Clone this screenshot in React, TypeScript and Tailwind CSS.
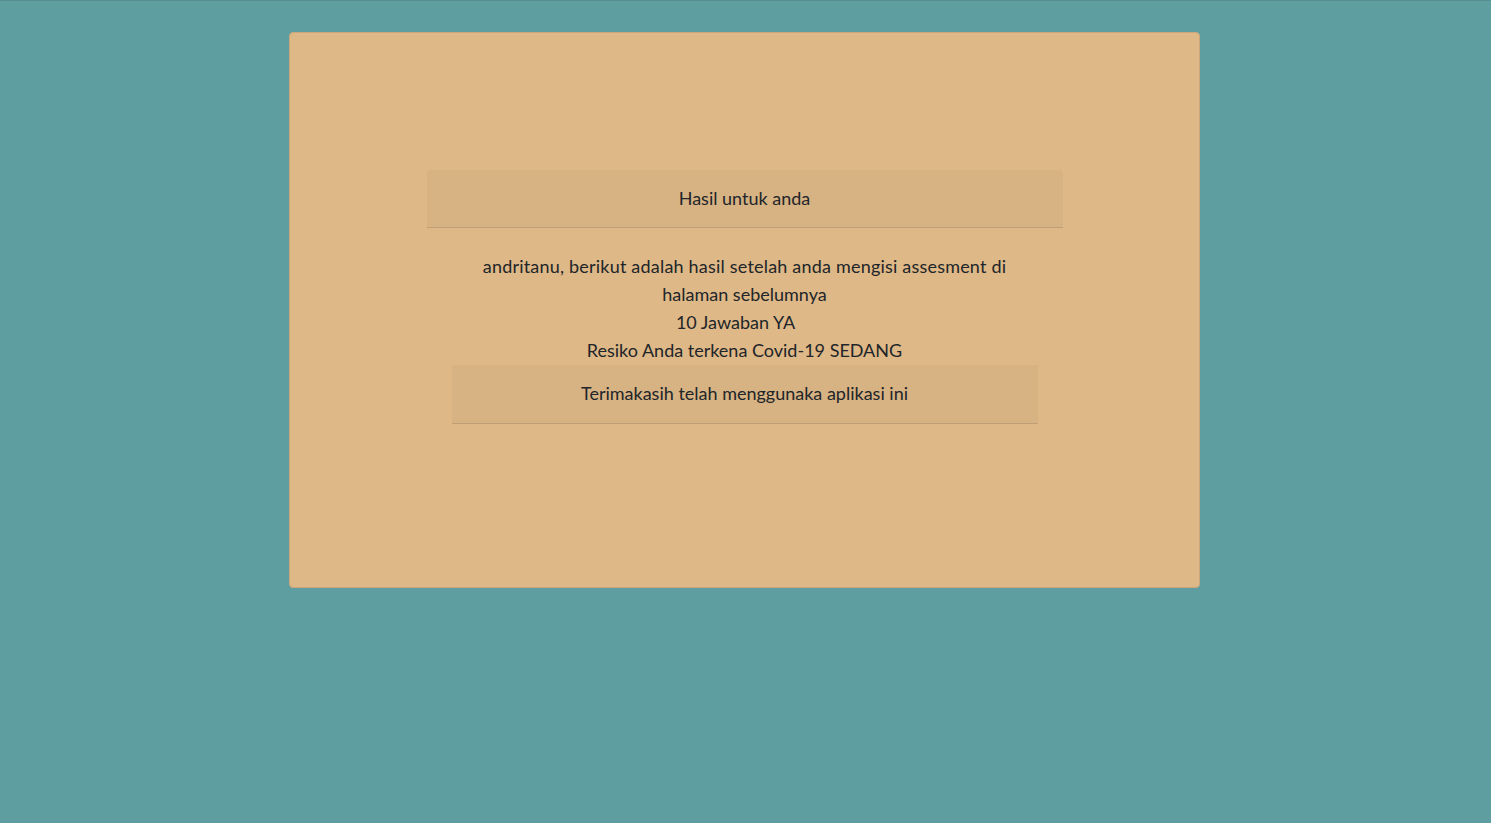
import React from 'react';

const hasil = {
  nama: 'andritanu',
  jumlahYa: 10,
  resiko: 'SEDANG',
};

export default function App() {
  return (
    <div className="min-h-[823px] w-full bg-[#5f9ea0] border-t border-[#578f91] pt-[31px] font-['Lato','Noto_Sans',sans-serif] text-[#212529]">
      <div className="mx-auto flex h-[556px] w-[911px] -translate-x-px flex-col items-center rounded border border-[#c9a77b] bg-[#deb887] pt-[137px]">
        <div className="flex h-[58px] w-[636px] items-center justify-center rounded-t border-b border-[#bf9f76] bg-[#d7b283] pb-[1px] text-[18px]">
          Hasil untuk anda
        </div>
        <div className="mt-[24px] text-center text-[18px] leading-[28px]">
          <p className="whitespace-nowrap tracking-[0.2px]">
            {hasil.nama}, berikut adalah hasil setelah anda mengisi assesment di
          </p>
          <p>halaman sebelumnya</p>
          <p className="pr-[18px]">{hasil.jumlahYa} Jawaban YA</p>
          <p>Resiko Anda terkena Covid-19 {hasil.resiko}</p>
        </div>
        <div className="mt-px flex h-[59px] w-[586px] items-center justify-center border-b border-[#bf9f76] bg-[#d7b283] pb-[1px] text-[18px]">
          Terimakasih telah menggunaka aplikasi ini
        </div>
      </div>
    </div>
  );
}
